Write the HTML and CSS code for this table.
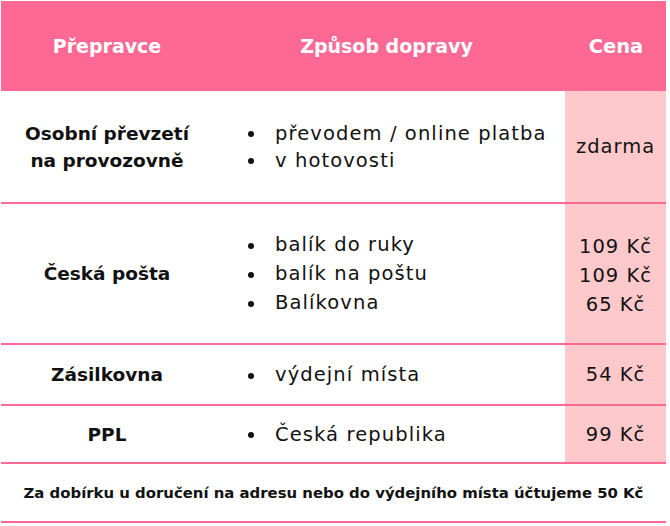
FILE: index.html
```html
<!DOCTYPE html>
<html lang="cs">
<head>
<meta charset="utf-8">
<link rel="stylesheet" href="styles.css">
</head>
<body>
<table class="ship">
  <colgroup>
    <col class="c1"><col class="c2"><col class="c3">
  </colgroup>
  <thead>
    <tr class="head">
      <th>Přepravce</th>
      <th>Způsob dopravy</th>
      <th>Cena</th>
    </tr>
  </thead>
  <tbody>
    <tr class="r1">
      <td class="name">Osobní převzetí<br>na provozovně</td>
      <td class="ways"><ul class="list tight"><li>převodem / online platba</li><li>v hotovosti</li></ul></td>
      <td class="price">zdarma</td>
    </tr>
    <tr class="r2">
      <td class="name">Česká pošta</td>
      <td class="ways"><ul class="list"><li>balík do ruky</li><li>balík na poštu</li><li>Balíkovna</li></ul></td>
      <td class="price"><div class="plist"><span>109 Kč</span><span>109 Kč</span><span>65 Kč</span></div></td>
    </tr>
    <tr class="r3">
      <td class="name">Zásilkovna</td>
      <td class="ways"><ul class="list"><li>výdejní místa</li></ul></td>
      <td class="price">54 Kč</td>
    </tr>
    <tr class="r4">
      <td class="name">PPL</td>
      <td class="ways"><ul class="list"><li>Česká republika</li></ul></td>
      <td class="price">99 Kč</td>
    </tr>
    <tr class="foot">
      <td colspan="3">Za dobírku u doručení na adresu nebo do výdejního místa účtujeme 50 Kč</td>
    </tr>
  </tbody>
</table>
</body>
</html>
```
FILE: styles.css
```css
html, body {
  margin: 0;
  padding: 0;
  background: #ffffff;
}
body {
  padding: 1px;
  font-family: "DejaVu Sans", sans-serif;
  color: #111111;
}
.ship {
  border-collapse: collapse;
  width: 665px;
  table-layout: fixed;
}
.c1 { width: 212px; }
.c2 { width: 352px; }
.c3 { width: 101px; }
.ship th, .ship td {
  padding: 0;
  vertical-align: middle;
}
.head th {
  background: #fe6894;
  color: #ffffff;
  font-weight: bold;
  font-size: 19px;
  height: 90px;
  text-align: center;
}
.head th:nth-child(2) { padding-right: 5px; }
.head th:nth-child(3) { font-size: 19.5px; padding-left: 1px; }
tbody td {
  border-bottom: 2px solid #fd6895;
}
.name {
  text-align: center;
  font-weight: bold;
  font-size: 18.5px;
  line-height: 27px;
}
.price {
  background: #ffc9cc;
  text-align: center;
  font-size: 19.5px;
  letter-spacing: 1px;
  padding-left: 1px;
}
.r1 td { height: 111px; }
.r2 td { height: 139px; }
.r3 td { height: 59px; }
.r4 td { height: 56px; }
.foot td {
  height: 57px;
  text-align: center;
  font-weight: bold;
  font-size: 14.9px;
}
.list {
  list-style: none;
  margin: 0;
  padding: 0 0 0 62px;
  font-size: 19.5px;
  letter-spacing: 1.1px;
  line-height: 29px;
}
.list.tight { line-height: 27px; }
.list li {
  position: relative;
}
.list li::before {
  content: "";
  position: absolute;
  left: -27px;
  top: 50%;
  width: 6px;
  height: 6px;
  margin-top: -2px;
  border-radius: 50%;
  background: #111111;
}
.plist {
  display: flex;
  flex-direction: column;
  line-height: 29px;
  padding-top: 4px;
}
```
